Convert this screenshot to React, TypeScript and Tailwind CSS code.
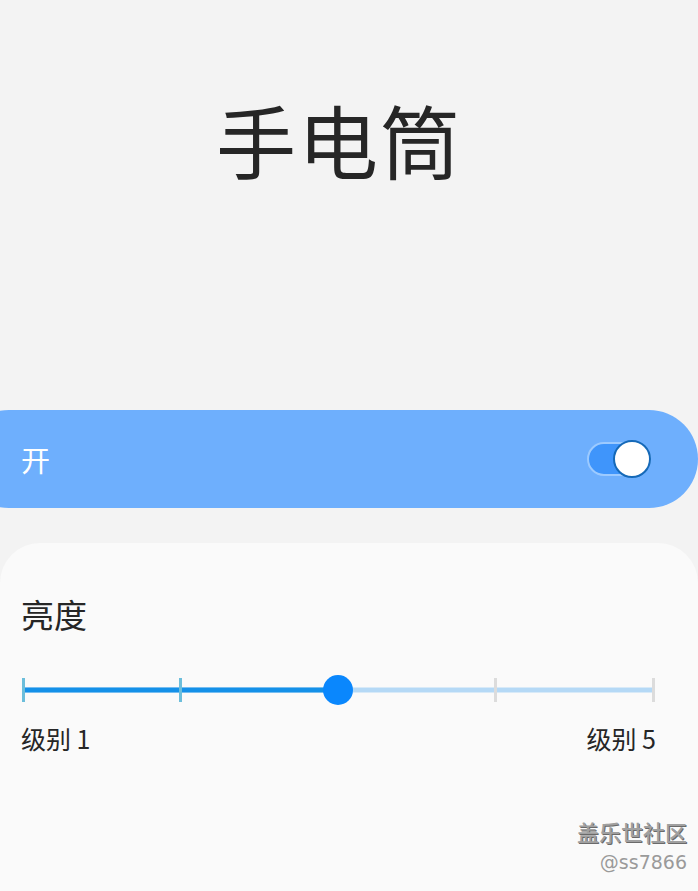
import React from 'react';

const cjk = { fontFamily: '"Noto Sans CJK SC", "Noto Sans", sans-serif' };

export default function App() {
  const ticks = [0, 1, 2, 3, 4];
  const level = 2;

  return (
    <div className="w-[698px] h-[891px] overflow-hidden bg-[#f3f3f3] flex flex-col relative" style={cjk}>
      {/* Title */}
      <div className="h-[410px] flex justify-center pt-[83px] pr-[20px]">
        <h1 className="text-[80px] leading-[110px] text-[#262626] tracking-[2px]">手电筒</h1>
      </div>

      {/* Main switch bar */}
      <div className="h-[98px] -ml-[40px] rounded-[49px] bg-[#6eaffd] flex items-center justify-between pl-[61px] pr-[47px]">
        <span className="text-[29px] text-white leading-none">开</span>
        <div className="relative w-[64px] h-[34px]">
          <div className="absolute inset-0 rounded-full bg-[#3f95fb] border-2 border-[#9ccaff]" />
          <div className="absolute right-0 top-1/2 -translate-y-1/2 w-[38px] h-[38px] rounded-full bg-white border-2 border-[#1569b8]" />
        </div>
      </div>

      {/* Brightness card */}
      <div className="mt-[35px] flex-1 bg-[#fafafa] rounded-t-[40px] pl-[21px] pr-[43px] pt-[50px]">
        <div className="text-[33px] text-[#262626] leading-[42px]">亮度</div>

        <div className="relative mt-[40px] h-[30px] ml-[2px] mr-[2px]">
          <div className="absolute left-0 right-0 top-1/2 -translate-y-1/2 h-[5px] bg-[#b5d9f6]" />
          <div className="absolute left-0 w-1/2 top-1/2 -translate-y-1/2 h-[5px] bg-[#1490e8]" />
          {ticks.map((t) => (
            <div
              key={t}
              className={`absolute top-1/2 -translate-y-1/2 w-[3px] h-[24px] -ml-[1.5px] ${t < level ? 'bg-[#6cbedb]' : 'bg-[#dcdcdc]'}`}
              style={{ left: `${t * 25}%` }}
            />
          ))}
          <div className="absolute top-1/2 left-1/2 -translate-x-1/2 -translate-y-1/2 w-[30px] h-[30px] rounded-full bg-[#0a87fd]" />
        </div>

        <div className="mt-[17px] flex justify-between text-[25px] text-[#262626] leading-[32px] -mr-[1px]">
          <span>级别 1</span>
          <span>级别 5</span>
        </div>
      </div>

      {/* Watermark */}
      <div className="absolute right-[11px] top-[817px] flex flex-col items-end">
        <span className="text-[22px] font-medium leading-[28px] text-[#a0a0a0] [text-shadow:1px_1px_0_#6a6a6a]">盖乐世社区</span>
        <span className="text-[19px] leading-[24px] text-[#9a9a9a] mt-[5px]" style={{ fontFamily: '"DejaVu Sans", sans-serif' }}>@ss7866</span>
      </div>
    </div>
  );
}
